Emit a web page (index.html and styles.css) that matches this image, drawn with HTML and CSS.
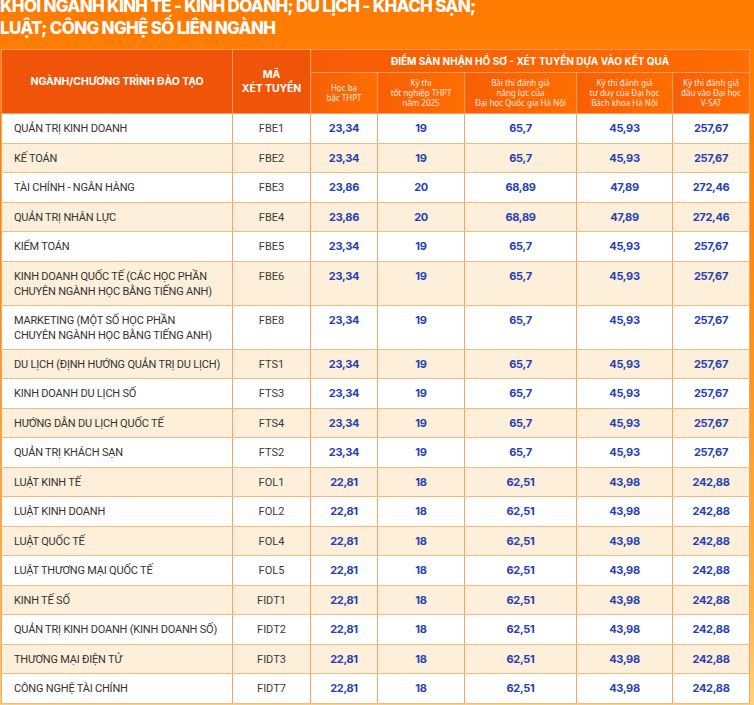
FILE: index.html
```html
<!DOCTYPE html>
<html lang="vi">
<head>
<meta charset="utf-8">
<link rel="stylesheet" href="styles.css">
</head>
<body>
<div class="page">
  <h1 class="title">KHỐI NGÀNH KINH TẾ - KINH DOANH; DU LỊCH - KHÁCH SẠN;<br>LUẬT; CÔNG NGHỆ SỐ LIÊN NGÀNH</h1>
  <table class="scores">
    <colgroup>
      <col class="c1"><col class="c2"><col class="c3"><col class="c4"><col class="c5"><col class="c6"><col class="c7">
    </colgroup>
    <thead>
      <tr class="h1">
        <th rowspan="2" class="hmain">NGÀNH/CHƯƠNG TRÌNH ĐÀO TẠO</th>
        <th rowspan="2" class="hmain">MÃ<br>XÉT TUYỂN</th>
        <th colspan="5" class="hgroup">ĐIỂM SÀN NHẬN HỒ SƠ - XÉT TUYỂN DỰA VÀO KẾT QUẢ</th>
      </tr>
      <tr class="h2">
        <th class="hsub">Học bạ<br>bậc THPT</th>
        <th class="hsub">Kỳ thi<br>tốt nghiệp THPT<br>năm 2025</th>
        <th class="hsub">Bài thi đánh giá<br>năng lực của<br>Đại học Quốc gia Hà Nội</th>
        <th class="hsub">Kỳ thi đánh giá<br>tư duy của Đại học<br>Bách khoa Hà Nội</th>
        <th class="hsub">Kỳ thi đánh giá<br>đầu vào Đại học<br>V-SAT</th>
      </tr>
    </thead>
    <tbody>
      <tr class="r"><td class="name">QUẢN TRỊ KINH DOANH</td><td class="code">FBE1</td><td class="num">23,34</td><td class="num">19</td><td class="num">65,7</td><td class="num">45,93</td><td class="num">257,67</td></tr>
      <tr class="r alt"><td class="name">KẾ TOÁN</td><td class="code">FBE2</td><td class="num">23,34</td><td class="num">19</td><td class="num">65,7</td><td class="num">45,93</td><td class="num">257,67</td></tr>
      <tr class="r"><td class="name">TÀI CHÍNH - NGÂN HÀNG</td><td class="code">FBE3</td><td class="num">23,86</td><td class="num">20</td><td class="num">68,89</td><td class="num">47,89</td><td class="num">272,46</td></tr>
      <tr class="r alt"><td class="name">QUẢN TRỊ NHÂN LỰC</td><td class="code">FBE4</td><td class="num">23,86</td><td class="num">20</td><td class="num">68,89</td><td class="num">47,89</td><td class="num">272,46</td></tr>
      <tr class="r"><td class="name">KIỂM TOÁN</td><td class="code">FBE5</td><td class="num">23,34</td><td class="num">19</td><td class="num">65,7</td><td class="num">45,93</td><td class="num">257,67</td></tr>
      <tr class="r2 alt"><td class="name">KINH DOANH QUỐC TẾ (CÁC HỌC PHẦN<br>CHUYÊN NGÀNH HỌC BẰNG TIẾNG ANH)</td><td class="code">FBE6</td><td class="num">23,34</td><td class="num">19</td><td class="num">65,7</td><td class="num">45,93</td><td class="num">257,67</td></tr>
      <tr class="r2"><td class="name">MARKETING (MỘT SỐ HỌC PHẦN<br>CHUYÊN NGÀNH HỌC BẰNG TIẾNG ANH)</td><td class="code">FBE8</td><td class="num">23,34</td><td class="num">19</td><td class="num">65,7</td><td class="num">45,93</td><td class="num">257,67</td></tr>
      <tr class="r alt"><td class="name">DU LỊCH (ĐỊNH HƯỚNG QUẢN TRỊ DU LỊCH)</td><td class="code">FTS1</td><td class="num">23,34</td><td class="num">19</td><td class="num">65,7</td><td class="num">45,93</td><td class="num">257,67</td></tr>
      <tr class="r"><td class="name">KINH DOANH DU LỊCH SỐ</td><td class="code">FTS3</td><td class="num">23,34</td><td class="num">19</td><td class="num">65,7</td><td class="num">45,93</td><td class="num">257,67</td></tr>
      <tr class="r alt"><td class="name">HƯỚNG DẪN DU LỊCH QUỐC TẾ</td><td class="code">FTS4</td><td class="num">23,34</td><td class="num">19</td><td class="num">65,7</td><td class="num">45,93</td><td class="num">257,67</td></tr>
      <tr class="r"><td class="name">QUẢN TRỊ KHÁCH SẠN</td><td class="code">FTS2</td><td class="num">23,34</td><td class="num">19</td><td class="num">65,7</td><td class="num">45,93</td><td class="num">257,67</td></tr>
      <tr class="r alt"><td class="name">LUẬT KINH TẾ</td><td class="code">FOL1</td><td class="num">22,81</td><td class="num">18</td><td class="num">62,51</td><td class="num">43,98</td><td class="num">242,88</td></tr>
      <tr class="r"><td class="name">LUẬT KINH DOANH</td><td class="code">FOL2</td><td class="num">22,81</td><td class="num">18</td><td class="num">62,51</td><td class="num">43,98</td><td class="num">242,88</td></tr>
      <tr class="r alt"><td class="name">LUẬT QUỐC TẾ</td><td class="code">FOL4</td><td class="num">22,81</td><td class="num">18</td><td class="num">62,51</td><td class="num">43,98</td><td class="num">242,88</td></tr>
      <tr class="r"><td class="name">LUẬT THƯƠNG MẠI QUỐC TẾ</td><td class="code">FOL5</td><td class="num">22,81</td><td class="num">18</td><td class="num">62,51</td><td class="num">43,98</td><td class="num">242,88</td></tr>
      <tr class="r alt"><td class="name">KINH TẾ SỐ</td><td class="code">FIDT1</td><td class="num">22,81</td><td class="num">18</td><td class="num">62,51</td><td class="num">43,98</td><td class="num">242,88</td></tr>
      <tr class="r"><td class="name">QUẢN TRỊ KINH DOANH (KINH DOANH SỐ)</td><td class="code">FIDT2</td><td class="num">22,81</td><td class="num">18</td><td class="num">62,51</td><td class="num">43,98</td><td class="num">242,88</td></tr>
      <tr class="r alt"><td class="name">THƯƠNG MẠI ĐIỆN TỬ</td><td class="code">FIDT3</td><td class="num">22,81</td><td class="num">18</td><td class="num">62,51</td><td class="num">43,98</td><td class="num">242,88</td></tr>
      <tr class="r"><td class="name">CÔNG NGHỆ TÀI CHÍNH</td><td class="code">FIDT7</td><td class="num">22,81</td><td class="num">18</td><td class="num">62,51</td><td class="num">43,98</td><td class="num">242,88</td></tr>
    </tbody>
  </table>
</div>
</body>
</html>
```
FILE: styles.css
```css
html, body {
  margin: 0;
  padding: 0;
}
body {
  width: 754px;
  height: 705px;
  overflow: hidden;
  background: linear-gradient(180deg, #ff7a00 0%, #ff8a10 40%, #ffb347 85%, #ffd27a 100%);
  font-family: Roboto, "Noto Sans", sans-serif;
}
.page {
  padding: 0 0 0 1px;
}
.title {
  margin: -5px 0 0 -1px;
  height: 54px;
  font-family: Inter, "Noto Sans", sans-serif;
  font-weight: 800;
  font-size: 17px;
  line-height: 22px;
  color: #ffffff;
  letter-spacing: -0.7px;
}
.scores {
  border-collapse: collapse;
  table-layout: fixed;
  width: 748px;
}
.c1 { width: 231px; }
.c2 { width: 78px; }
.c3 { width: 67px; }
.c4 { width: 87px; }
.c5 { width: 112px; }
.c6 { width: 96px; }
.c7 { width: 77px; }

thead th {
  color: #ffffff;
  border: 1px solid #f79a62;
  padding: 0;
  text-align: center;
  vertical-align: middle;
}
.h1 { height: 23px; }
.h2 { height: 41px; }
.hmain {
  background: #ef5408;
  font-family: Inter, "Noto Sans", sans-serif;
  font-weight: 700;
  font-size: 10.5px;
  line-height: 14px;
  letter-spacing: -0.1px;
}
.hgroup {
  background: linear-gradient(90deg, #f65c06, #ff6c00);
  font-family: Inter, "Noto Sans", sans-serif;
  font-weight: 700;
  font-size: 10px;
}
.hsub {
  background: linear-gradient(90deg, #f85f06, #ff6e00);
  font-family: "Noto Sans", sans-serif;
  font-weight: 400;
  font-size: 8px;
  line-height: 10px;
  color: #ffece0;
}

tbody td {
  border: 1px solid #f2b981;
  border-left-color: #eea669;
  border-right-color: #eea669;
  padding: 7px 0 0;
  vertical-align: top;
  line-height: 15px;
  background: #ffffff;
}
tbody tr.alt td { background: #fdefd9; }
tr.r { height: 29.5px; }
tr.r2 { height: 44px; }
.name {
  padding-left: 12px !important;
  font-size: 11px;
  letter-spacing: -0.2px;
  color: #333333;
  white-space: nowrap;
}
.code {
  text-align: center;
  font-size: 11px;
  color: #3a3a3a;
}
.num {
  text-align: center;
  font-family: Inter, "Noto Sans", sans-serif;
  font-weight: 700;
  font-size: 11px;
  color: #2540b5;
  letter-spacing: -0.3px;
}
```
